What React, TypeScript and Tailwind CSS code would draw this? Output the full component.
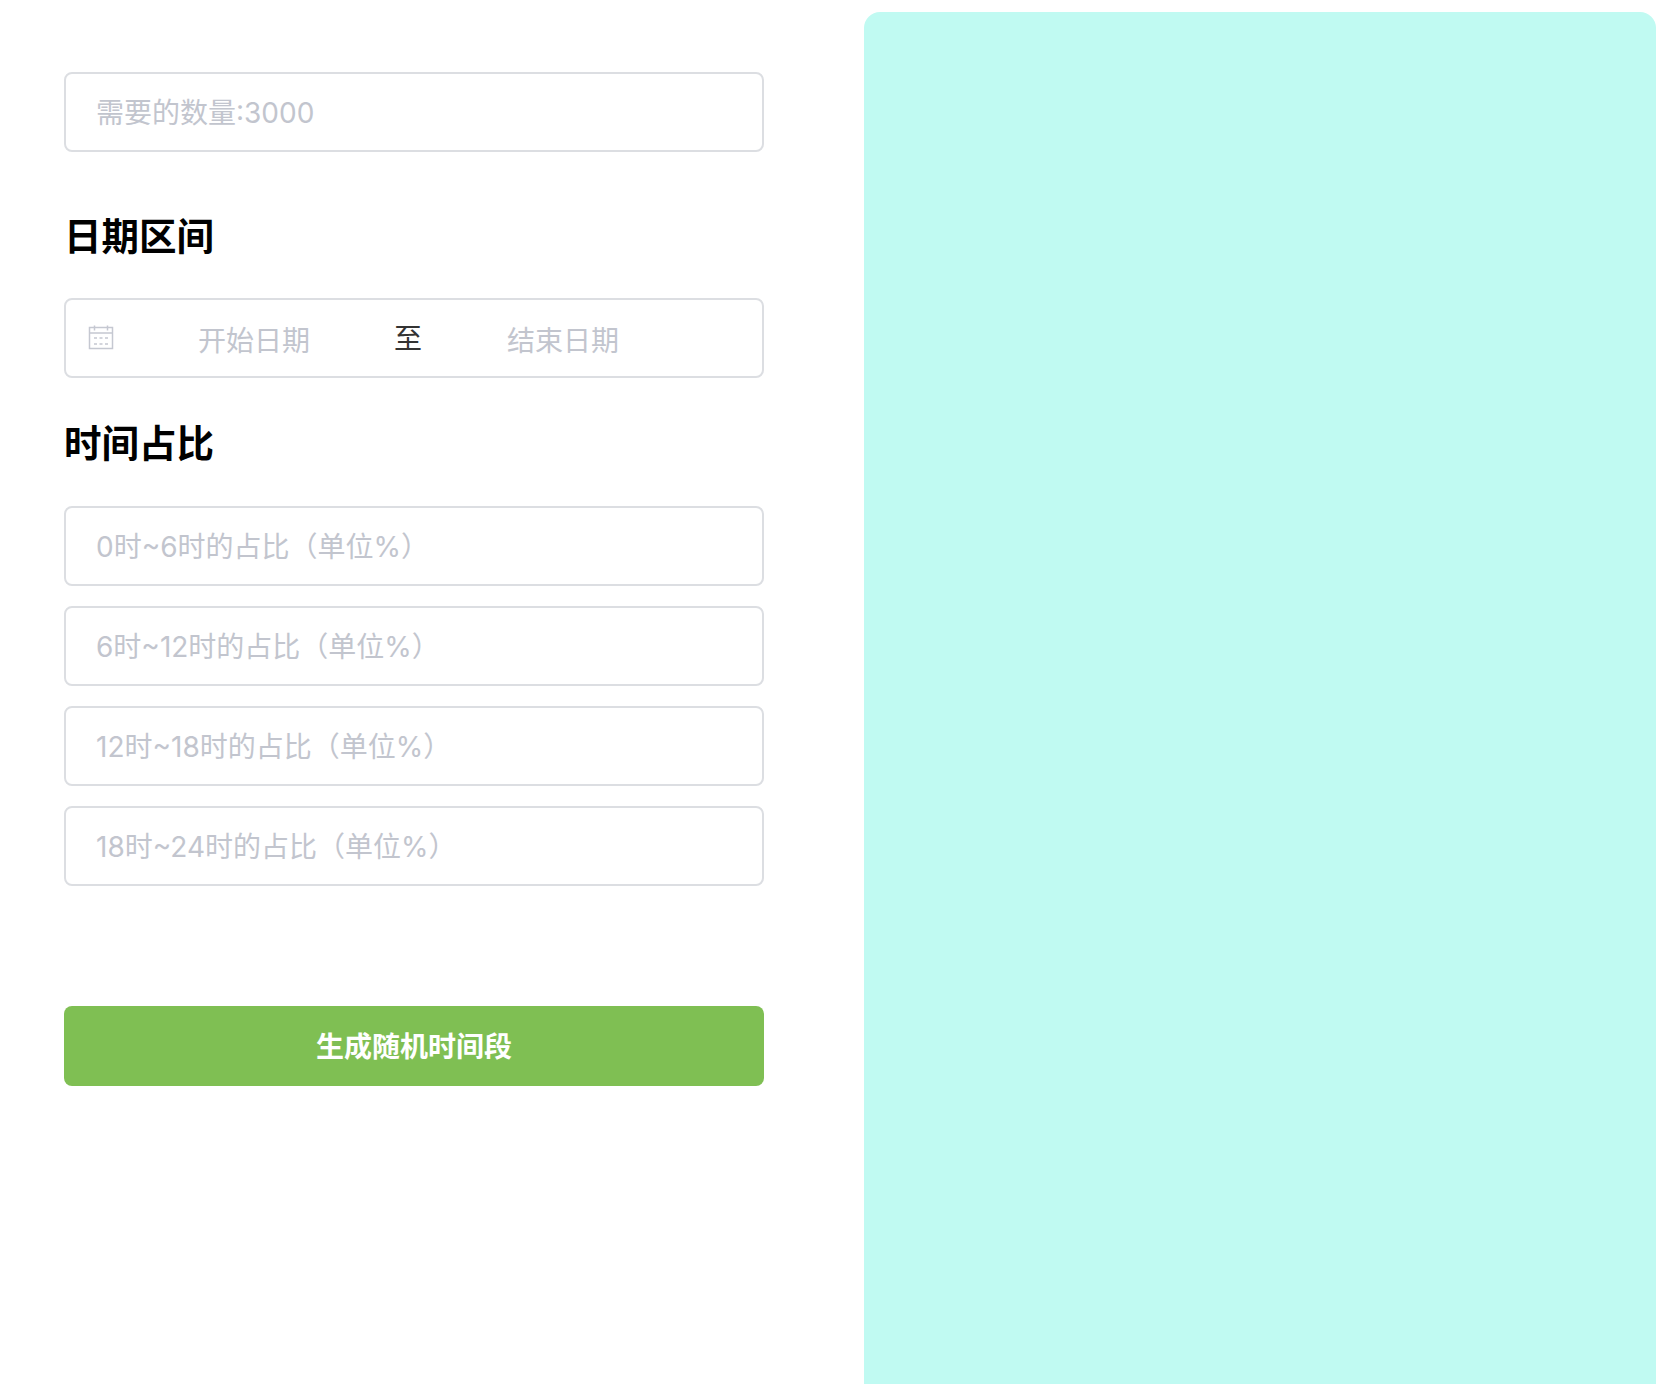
import { type ReactNode } from "react";

const ratios = [
  "0时~6时的占比(单位%)",
  "6时~12时的占比(单位%)",
  "12时~18时的占比(单位%)",
  "18时~24时的占比(单位%)",
].map((r) => r.replace("(", "（").replace(")", "）"));

function Field({ placeholder }: { placeholder: string }) {
  return (
    <input
      readOnly
      placeholder={placeholder}
      className="block h-20 w-full rounded-lg border-2 border-[#dcdee2] bg-white px-[30px] pt-0.5 text-[28px] outline-none placeholder:text-[#c2c5ce]"
    />
  );
}

function Heading({ children, className }: { children: ReactNode; className: string }) {
  return <h2 className={`text-[37.5px] leading-[50px] font-bold text-black ${className}`}>{children}</h2>;
}

function CalendarIcon() {
  return (
    <svg viewBox="0 0 26 26" className="h-[26px] w-[26px] shrink-0" fill="none" stroke="#c5c8d1" strokeWidth="1.5">
      <rect x="1.5" y="2.5" width="23" height="21" />
      <path d="M1.5 8h23M6.5 0.5v5M19.5 0.5v5" />
      <path d="M6 13h14M6 19h14" strokeDasharray="3 2.5" />
    </svg>
  );
}

export default function App() {
  return (
    <div className="flex h-[1384px] w-[1670px] overflow-hidden bg-white font-['Inter','Noto_Sans_CJK_SC',sans-serif]">
      <div className="w-[864px] shrink-0 pt-[72px] pl-16">
        <div className="w-[700px]">
          <Field placeholder="需要的数量:3000" />
          <Heading className="mt-[60px] mb-[36px]">日期区间</Heading>
          <div className="flex h-20 items-center rounded-lg border-2 border-[#dcdee2] bg-white pl-[22px] text-[28px]">
            <CalendarIcon />
            <span className="ml-[84px] w-[112px] pt-1.5 text-[#c2c5ce]">开始日期</span>
            <span className="ml-[84px] pt-0.5 text-[#333333]">至</span>
            <span className="ml-[85px] pt-1.5 text-[#c2c5ce]">结束日期</span>
          </div>
          <Heading className="mt-[41px] mb-[37px]">时间占比</Heading>
          <div className="flex flex-col gap-5">
            {ratios.map((r) => (
              <Field key={r} placeholder={r} />
            ))}
          </div>
          <button className="mt-[120px] block h-20 w-full rounded-lg bg-[#7fbf53] pt-0.5 text-[28px] font-bold text-white">
            生成随机时间段
          </button>
        </div>
      </div>
      <div className="mt-3 mr-[14px] flex-1 rounded-t-2xl bg-[#c0faf2]" />
    </div>
  );
}
